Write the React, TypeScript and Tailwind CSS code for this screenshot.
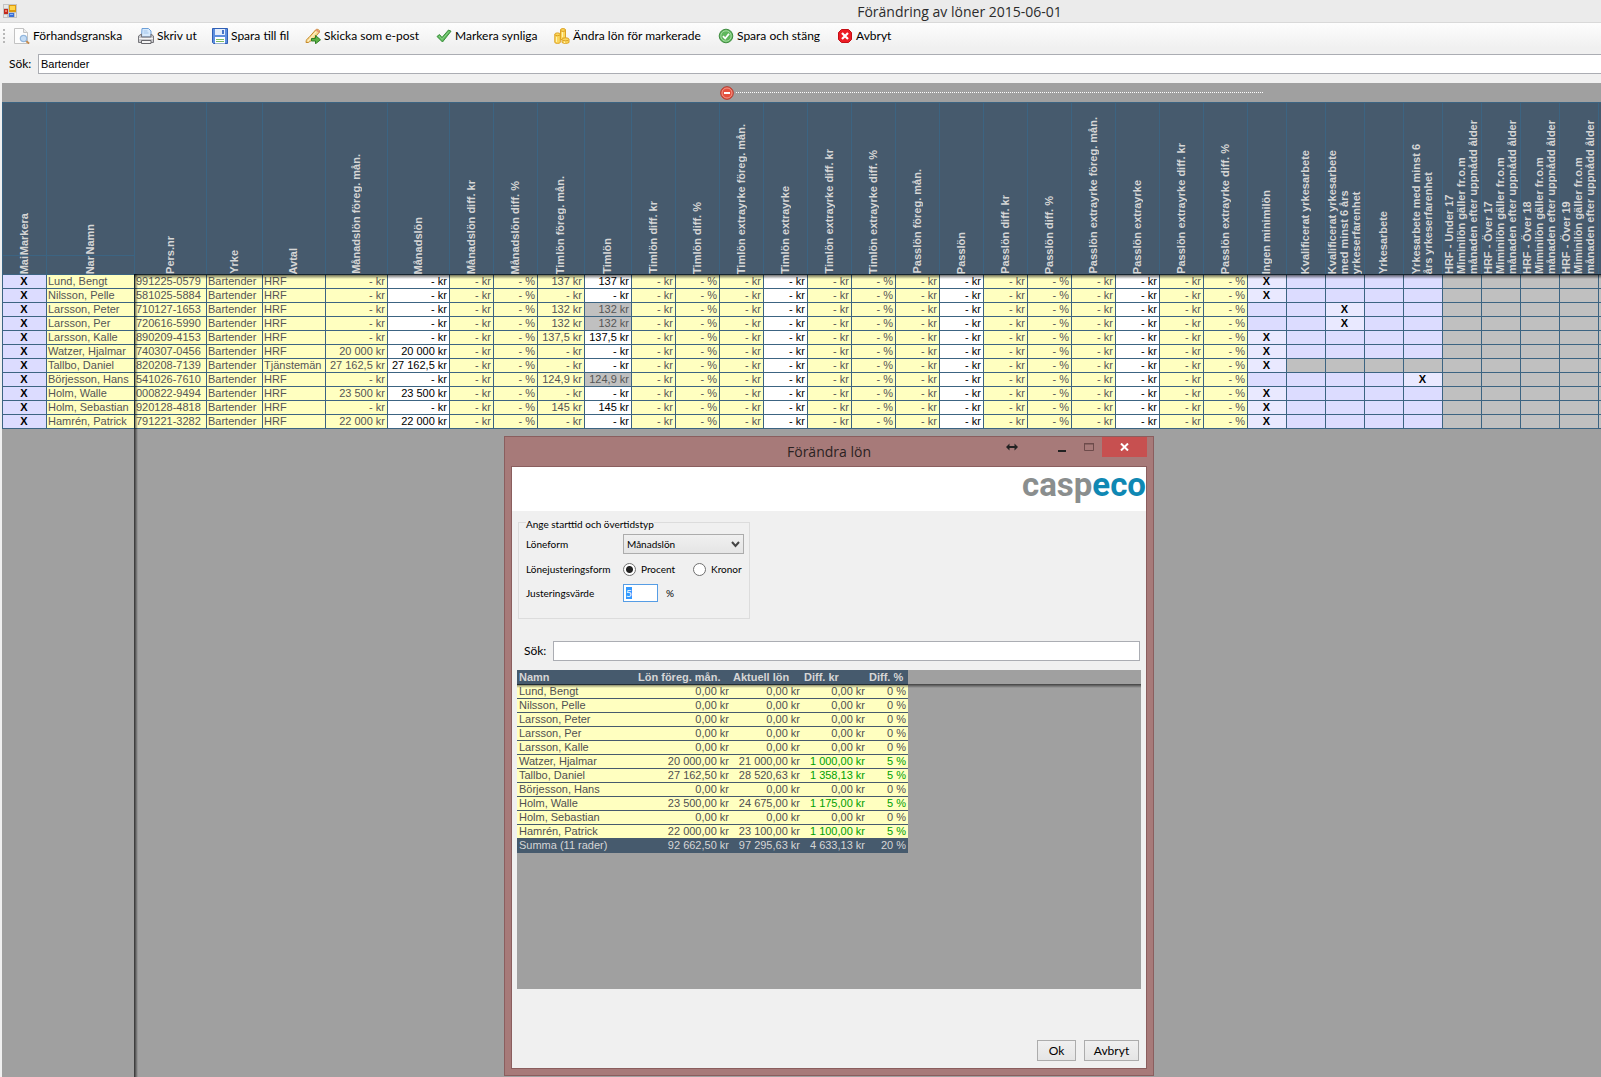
import React, { useEffect, useRef, useState } from 'react';
import clsx from 'clsx';

type Tone = 'yellow' | 'white' | 'grey' | 'lilac' | 'mark';

interface Column {
  title: string;
  width: string;
}

interface Employee {
  name: string;
  personNumber: string;
  agreement: string;
  monthly: string;
  hourly: string;
  hourlyLocked?: boolean;
  level: number;
  levelsLocked?: boolean;
}

const COLUMNS: Column[] = [
  { title: 'Pers.nr', width: 'w-[72px]' },
  { title: 'Yrke', width: 'w-[56px]' },
  { title: 'Avtal', width: 'w-[63px]' },
  { title: 'Månadslön föreg. mån.', width: 'w-[62px]' },
  { title: 'Månadslön', width: 'w-[62px]' },
  { title: 'Månadslön diff. kr', width: 'w-[44px]' },
  { title: 'Månadslön diff. %', width: 'w-[44px]' },
  { title: 'Timlön föreg. mån.', width: 'w-[47px]' },
  { title: 'Timlön', width: 'w-[47px]' },
  { title: 'Timlön diff. kr', width: 'w-[44px]' },
  { title: 'Timlön diff. %', width: 'w-[44px]' },
  { title: 'Timlön extrayrke föreg. mån.', width: 'w-[44px]' },
  { title: 'Timlön extrayrke', width: 'w-[44px]' },
  { title: 'Timlön extrayrke diff. kr', width: 'w-[44px]' },
  { title: 'Timlön extrayrke diff. %', width: 'w-[44px]' },
  { title: 'Passlön föreg. mån.', width: 'w-[44px]' },
  { title: 'Passlön', width: 'w-[44px]' },
  { title: 'Passlön diff. kr', width: 'w-[44px]' },
  { title: 'Passlön diff. %', width: 'w-[44px]' },
  { title: 'Passlön extrayrke föreg. mån.', width: 'w-[44px]' },
  { title: 'Passlön extrayrke', width: 'w-[44px]' },
  { title: 'Passlön extrayrke diff. kr', width: 'w-[44px]' },
  { title: 'Passlön extrayrke diff. %', width: 'w-[44px]' },
  { title: 'Ingen minimilön', width: 'w-[39px]' },
  { title: 'Kvalificerat yrkesarbete', width: 'w-[39px]' },
  { title: 'Kvalificerat yrkesarbete\nmed minst 6 års\nyrkeserfarenhet', width: 'w-[39px]' },
  { title: 'Yrkesarbete', width: 'w-[39px]' },
  { title: 'Yrkesarbete med minst 6\nårs yrkeserfarenhet', width: 'w-[39px]' },
  { title: 'HRF - Under 17\nMiminilön gäller fr.o.m\nmånaden efter uppnådd ålder', width: 'w-[39px]' },
  { title: 'HRF - Över 17\nMiminilön gäller fr.o.m\nmånaden efter uppnådd ålder', width: 'w-[39px]' },
  { title: 'HRF - Över 18\nMiminilön gäller fr.o.m\nmånaden efter uppnådd ålder', width: 'w-[39px]' },
  { title: 'HRF - Över 19\nMiminilön gäller fr.o.m\nmånaden efter uppnådd ålder', width: 'w-[39px]' },
  { title: '', width: 'w-[39px]' },
];

const EMPLOYEES: Employee[] = [
  { name: 'Lund, Bengt', personNumber: '991225-0579', agreement: 'HRF', monthly: '- kr', hourly: '137 kr', level: 0 },
  { name: 'Nilsson, Pelle', personNumber: '581025-5884', agreement: 'HRF', monthly: '- kr', hourly: '- kr', level: 0 },
  { name: 'Larsson, Peter', personNumber: '710127-1653', agreement: 'HRF', monthly: '- kr', hourly: '132 kr', hourlyLocked: true, level: 2 },
  { name: 'Larsson, Per', personNumber: '720616-5990', agreement: 'HRF', monthly: '- kr', hourly: '132 kr', hourlyLocked: true, level: 2 },
  { name: 'Larsson, Kalle', personNumber: '890209-4153', agreement: 'HRF', monthly: '- kr', hourly: '137,5 kr', level: 0 },
  { name: 'Watzer, Hjalmar', personNumber: '740307-0456', agreement: 'HRF', monthly: '20 000 kr', hourly: '- kr', level: 0 },
  { name: 'Tallbo, Daniel', personNumber: '820208-7139', agreement: 'Tjänstemän', monthly: '27 162,5 kr', hourly: '- kr', level: 0, levelsLocked: true },
  { name: 'Börjesson, Hans', personNumber: '541026-7610', agreement: 'HRF', monthly: '- kr', hourly: '124,9 kr', hourlyLocked: true, level: 4 },
  { name: 'Holm, Walle', personNumber: '000822-9494', agreement: 'HRF', monthly: '23 500 kr', hourly: '- kr', level: 0 },
  { name: 'Holm, Sebastian', personNumber: '920128-4818', agreement: 'HRF', monthly: '- kr', hourly: '145 kr', level: 0 },
  { name: 'Hamrén, Patrick', personNumber: '791221-3282', agreement: 'HRF', monthly: '22 000 kr', hourly: '- kr', level: 0 },
];

const ADJUSTMENTS = [
  ['Lund, Bengt', '0,00 kr', '0,00 kr', '0,00 kr', '0 %'],
  ['Nilsson, Pelle', '0,00 kr', '0,00 kr', '0,00 kr', '0 %'],
  ['Larsson, Peter', '0,00 kr', '0,00 kr', '0,00 kr', '0 %'],
  ['Larsson, Per', '0,00 kr', '0,00 kr', '0,00 kr', '0 %'],
  ['Larsson, Kalle', '0,00 kr', '0,00 kr', '0,00 kr', '0 %'],
  ['Watzer, Hjalmar', '20 000,00 kr', '21 000,00 kr', '1 000,00 kr', '5 %'],
  ['Tallbo, Daniel', '27 162,50 kr', '28 520,63 kr', '1 358,13 kr', '5 %'],
  ['Börjesson, Hans', '0,00 kr', '0,00 kr', '0,00 kr', '0 %'],
  ['Holm, Walle', '23 500,00 kr', '24 675,00 kr', '1 175,00 kr', '5 %'],
  ['Holm, Sebastian', '0,00 kr', '0,00 kr', '0,00 kr', '0 %'],
  ['Hamrén, Patrick', '22 000,00 kr', '23 100,00 kr', '1 100,00 kr', '5 %'],
];

const TONES: Record<Tone, string> = {
  yellow: 'bg-[#ffffc0] text-[#555555]',
  white: 'bg-white text-black',
  grey: 'bg-[#c0c0c0] text-[#555555]',
  lilac: 'bg-[#dcdcff] text-black',
  mark: 'bg-[#e9e9ff] text-black',
};

/* ---------- Icons ---------- */

const AppIcon = () => (
  <svg width="14" height="14" viewBox="0 0 14 14">
    <path d="M0 0h14v14H0z" fill="#c4c4c4" />
    <path d="M1 1h4v3H1zM1 11h3v2H1zM12 9h1v4h-1z" fill="#e8e8e8" />
    <path d="M1 5h4v5H1z" fill="#c22a1c" />
    <path d="M2 6h2v2H2z" fill="#ef7c6a" />
    <path d="M6 1h7v7H6z" fill="#dc9a10" />
    <path d="M7 2h5v4H7z" fill="#ffd54a" />
    <path d="M6 9h5v4H6z" fill="#3b6fd6" />
    <path d="M7 10h3v1H7z" fill="#8fb6f5" />
  </svg>
);

const PreviewIcon = () => (
  <svg width="16" height="16" viewBox="0 0 16 16">
    <path d="M.5 .5h9l4 4v11H.5z" fill="#fdfdfd" stroke="#c3c3c3" />
    <path d="M9.500 .5v4h4" fill="#ececec" stroke="#c3c3c3" />
    <path d="M12 13l2.500 2" stroke="#c58b4e" strokeWidth="2" strokeLinecap="round" />
    <circle cx="9.500" cy="10.500" r="3.200" fill="#c4dcf5" stroke="#93b7dd" strokeWidth="1.200" />
  </svg>
);

const PrintIcon = () => (
  <svg width="16" height="16" viewBox="0 0 16 16">
    <path d="M4 .5h6.500L13 3v6H3.500z" fill="#d8eafc" stroke="#6c9fd8" />
    <path d="M5.500 3h4M5.500 5h5" stroke="#9fc3ea" />
    <path d="M.5 8L3.500 6v3h9.500V6l2.500 2V14.500H.5z" fill="#c9c9cc" stroke="#77777c" />
    <path d="M1 10.500h14" stroke="#f4f4f4" />
    <path d="M3.500 12.500h9.500v3h-9.500z" fill="#f4f4f4" stroke="#66666b" />
  </svg>
);

const SaveIcon = () => (
  <svg width="16" height="16" viewBox="0 0 16 16">
    <path d="M.5 .5h15v15h-14l-1-1z" fill="#5d8ede" stroke="#2f5fb5" />
    <path d="M3 1h10v6H3z" fill="#e3edfb" />
    <path d="M10 2h2v4h-2z" fill="#4474c8" />
    <path d="M3 9h10v6.500H3z" fill="#fff" />
    <path d="M4 11.500h8M4 13.500h8" stroke="#7dbb62" />
  </svg>
);

const MailIcon = () => (
  <svg width="16" height="16" viewBox="0 0 16 16">
    <path d="M1 14.500c0-3 1.500-4 3-5L10.500 2c1-1.500 4.500-.5 4 2L8 11.500c-1.500 1.500-3 1.500-4.500 3z" fill="#f8dc93" stroke="#c5892c" />
    <path d="M11 1.500l3.500 3" stroke="#e28e76" strokeWidth="1.500" />
    <path d="M3 13l8-9" stroke="#fff4d2" />
    <path d="M6.500 10.500h4v-3l5 4.300-5 4v-2.800h-4z" fill="#5cb244" stroke="#2f7e24" />
  </svg>
);

const CheckIcon = () => (
  <svg width="16" height="16" viewBox="0 0 16 16">
    <path d="M1 8.500l2.500-2 2.500 3 6.500-7.500 2.500 1.200-8.500 10.800z" fill="#5cb85a" stroke="#3c8f3e" strokeLinejoin="round" />
    <path d="M3 8l3 3.500 7-8" fill="none" stroke="#8ed48b" />
  </svg>
);

const CoinsIcon = () => (
  <svg width="16" height="16" viewBox="0 0 16 16">
    <g fill="#fbd75c" stroke="#dca124">
      <path d="M6.500 2v9.500h5V2z" />
      <ellipse cx="9" cy="2" rx="2.500" ry="1.400" />
      <path d="M.8 6.500v8c1 1.200 4.500 1.200 5.500 0v-8z" />
      <ellipse cx="3.500" cy="6.300" rx="2.700" ry="1.400" />
      <path d="M8 11.500v3c1.500 1.200 5.500 1.200 7 0v-3z" />
      <ellipse cx="11.500" cy="11.300" rx="3.500" ry="1.500" />
    </g>
    <path d="M2.500 9v5M8.500 4v5M10.500 13.500v1.500" stroke="#fff1b0" />
  </svg>
);

const SaveCloseIcon = () => (
  <svg width="16" height="16" viewBox="0 0 16 16">
    <circle cx="8" cy="8" r="6.800" fill="#5fb75c" stroke="#3f8c40" />
    <circle cx="8" cy="8" r="5.200" fill="none" stroke="#a5dba2" />
    <path d="M5 8.200l2.200 2.300L11 5.800" fill="none" stroke="#fff" strokeWidth="1.800" />
  </svg>
);

const CancelIcon = () => (
  <svg width="16" height="16" viewBox="0 0 16 16">
    <path d="M4.500 1.500h7l3 3v7l-3 3h-7l-3-3v-7z" fill="#ec1c24" stroke="#c40f16" strokeLinejoin="round" />
    <path d="M5 5l6 6M11 5l-6 6" stroke="#fff" strokeWidth="2.200" />
  </svg>
);

const TOOLS = [
  { label: 'Förhandsgranska', icon: <PreviewIcon />, width: 'w-[124px]' },
  { label: 'Skriv ut', icon: <PrintIcon />, width: 'w-[74px]' },
  { label: 'Spara till fil', icon: <SaveIcon />, width: 'w-[93px]' },
  { label: 'Skicka som e-post', icon: <MailIcon />, width: 'w-[131px]' },
  { label: 'Markera synliga', icon: <CheckIcon />, width: 'w-[118px]' },
  { label: 'Ändra lön för markerade', icon: <CoinsIcon />, width: 'w-[164px]' },
  { label: 'Spara och stäng', icon: <SaveCloseIcon />, width: 'w-[119px]' },
  { label: 'Avbryt', icon: <CancelIcon />, width: 'w-[60px]' },
];

/* ---------- Main window ---------- */

const Toolbar: React.FC = () => (
  <div className="flex h-[26px] items-center border-t border-[#d9d9d9] bg-gradient-to-b from-[#fdfdfd] to-[#f0f0f0] pl-[3px]">
    <div className="mr-[9px] flex flex-col gap-[2px]">
      <i className="size-[2px] bg-[#b8b8b8]" />
      <i className="size-[2px] bg-[#b8b8b8]" />
      <i className="size-[2px] bg-[#b8b8b8]" />
      <i className="size-[2px] bg-[#b8b8b8]" />
    </div>
    {TOOLS.map((tool) => (
      <button key={tool.label} className={clsx('flex shrink-0 items-center gap-[3px] whitespace-nowrap text-[12px] leading-4 text-black', tool.width)}>
        <span className="shrink-0">{tool.icon}</span>
        {tool.label}
      </button>
    ))}
  </div>
);

const VerticalText: React.FC<{ children: string }> = ({ children }) => (
  <span className="inline-block rotate-180 whitespace-pre text-left leading-[12px] [writing-mode:vertical-rl]">{children}</span>
);

// Frozen columns repeat the start of their caption in the lower strip
const FrozenHeader: React.FC<{ title: string; stub: string; className: string }> = ({ title, stub, className }) => (
  <th className={clsx('border-r border-t border-[#3c6482] p-0 align-bottom', className)}>
    <div className="flex h-[153px] items-end justify-center border-b border-[#3c6482] pr-[2px]">
      <VerticalText>{title}</VerticalText>
    </div>
    <div className="flex h-[18px] items-end justify-center pr-[2px]">
      <VerticalText>{stub}</VerticalText>
    </div>
  </th>
);

const Cell: React.FC<{ tone: Tone; align?: 'left' | 'right' | 'center'; children?: React.ReactNode }> = ({ tone, align = 'right', children }) => (
  <td
    className={clsx(
      'h-[14px] overflow-hidden whitespace-nowrap border-b border-r border-[#3c6482] py-0 pl-px pr-[2px]',
      TONES[tone],
      align === 'left' && 'text-left',
      align === 'right' && 'text-right',
      align === 'center' && 'text-center font-bold',
    )}
  >
    {children}
  </td>
);

const EmployeeRow: React.FC<{ employee: Employee }> = ({ employee }) => {
  const extras: { text: string; tone: Tone }[] = [
    { text: '- kr', tone: 'yellow' },
    { text: '- %', tone: 'yellow' },
    { text: '- kr', tone: 'yellow' },
    { text: '- kr', tone: 'white' },
  ];

  return (
    <tr>
      <td className="h-[14px] border-x border-b border-[#3c6482] bg-[#dcdcff] py-0 pl-px pr-[2px] text-center font-bold text-black">X</td>
      <Cell tone="yellow" align="left">{employee.name}</Cell>
      <Cell tone="yellow" align="left">{employee.personNumber}</Cell>
      <Cell tone="yellow" align="left">Bartender</Cell>
      <Cell tone="yellow" align="left">{employee.agreement}</Cell>
      <Cell tone="yellow">{employee.monthly}</Cell>
      <Cell tone="white">{employee.monthly}</Cell>
      <Cell tone="yellow">- kr</Cell>
      <Cell tone="yellow">- %</Cell>
      <Cell tone="yellow">{employee.hourly}</Cell>
      <Cell tone={employee.hourlyLocked ? 'grey' : 'white'}>{employee.hourly}</Cell>
      {[0, 1, 2].map((group) => extras.map((cell, i) => <Cell key={`${group}-${i}`} tone={cell.tone}>{cell.text}</Cell>))}
      <Cell tone="yellow">- kr</Cell>
      <Cell tone="yellow">- %</Cell>
      {[0, 1, 2, 3, 4].map((level) => {
        const marked = employee.level === level;
        const locked = employee.levelsLocked && level > 0;
        return (
          <Cell key={level} tone={marked ? 'mark' : locked ? 'grey' : 'lilac'} align="center">
            {marked && 'X'}
          </Cell>
        );
      })}
      {[0, 1, 2, 3, 4].map((i) => <Cell key={i} tone="grey" />)}
    </tr>
  );
};

const SalaryGrid: React.FC = () => (
  <div className="relative ml-[2px] flex-1 overflow-hidden bg-[#a0a0a0]">
    {/* Collapse handle over the hourly and shift columns */}
    <div className="flex h-[19px] items-center pl-[718px]">
      <button aria-label="Dölj kolumner" className="size-[14px]">
        <svg width="14" height="14" viewBox="0 0 14 14">
          <circle cx="7" cy="7" r="6.300" fill="#e4513f" stroke="#b5382b" />
          <circle cx="7" cy="7" r="5" fill="none" stroke="#f39a8c" />
          <path d="M4 7h6" stroke="#fff" strokeWidth="2" />
        </svg>
      </button>
      <div className="ml-[2px] w-[527px] border-t border-dotted border-white" />
    </div>

    <table className="w-[1636px] table-fixed border-separate border-spacing-0 text-[11px] leading-[13px]">
      <thead className="bg-[#465a6d] text-[#d6d6d6]">
        <tr>
          <FrozenHeader title="Markera" stub="Mai" className="w-[45px] border-l" />
          <FrozenHeader title="Namn" stub="Nar" className="w-[88px]" />
          {COLUMNS.map((column, i) => (
            <th key={i} className={clsx('h-[172px] border-r border-t border-[#3c6482] p-0 text-center align-bottom', column.width)}>
              <div className="flex justify-center pr-[2px]">
                <VerticalText>{column.title}</VerticalText>
              </div>
            </th>
          ))}
        </tr>
      </thead>
      <tbody>
        <tr>
          <td colSpan={35} className="h-px bg-[#3c6482] p-0" />
        </tr>
        {EMPLOYEES.map((employee) => (
          <EmployeeRow key={employee.personNumber} employee={employee} />
        ))}
      </tbody>
    </table>

    {/* Shadows cast by the frozen header and columns */}
    <div className="pointer-events-none absolute left-[132px] right-0 top-[191px] h-[5px] bg-gradient-to-b from-black/70 to-transparent" />
    <div className="pointer-events-none absolute bottom-0 left-[132px] top-[191px] w-[4px] bg-gradient-to-r from-black/70 to-transparent" />
  </div>
);

/* ---------- Dialog ---------- */

const TitleBar: React.FC = () => (
  <div className="grid h-[29px] grid-cols-[1fr_auto_1fr] font-['Open_Sans',sans-serif]">
    <span />
    <h2 className="self-center text-[14px] leading-5 text-[#2b2222]">Förändra lön</h2>
    <div className="flex items-start justify-end">
      <button aria-label="Flytta" className="mr-[28px] flex h-[20px] w-[16px] items-center justify-center">
        <svg width="12" height="8" viewBox="0 0 12 8">
          <path d="M0 4l3.500-3.500v2.500h5V.5L12 4 8.500 7.500V5h-5v2.500z" fill="#222" />
        </svg>
      </button>
      <button aria-label="Minimera" className="flex h-[20px] w-[27px] items-center justify-center">
        <svg width="8" height="10" viewBox="0 0 8 10">
          <path d="M0 8h8v2H0z" fill="#222" />
        </svg>
      </button>
      <button aria-label="Maximera" className="flex h-[20px] w-[27px] items-center justify-center">
        <svg width="10" height="8" viewBox="0 0 10 8">
          <path d="M.5 1h9v6.500h-9zM0 .5h10" fill="none" stroke="#6d4b4b" />
        </svg>
      </button>
      <button aria-label="Stäng" className="flex h-[20px] w-[45px] items-center justify-center bg-[#c75050]">
        <svg width="9" height="8" viewBox="0 0 9 8">
          <path d="M1 .5l7 7M8 .5l-7 7" stroke="#fff" strokeWidth="2" />
        </svg>
      </button>
    </div>
  </div>
);

const AdjustmentTable: React.FC = () => (
  <div className="relative mx-[5px] mt-[9px] h-[319px] bg-[#a0a0a0] font-['Liberation_Sans',Arial,sans-serif]">
    <table className="w-[391px] table-fixed border-separate border-spacing-0 text-[11px] leading-[13px]">
      <thead>
        <tr className="bg-[#465a6d] text-left text-[#d6d6d6]">
          <th className="h-[15px] w-[119px] px-[2px] py-0">Namn</th>
          <th className="w-[95px] whitespace-nowrap px-[2px] py-0">Lön föreg. mån.</th>
          <th className="w-[71px] px-[2px] py-0">Aktuell lön</th>
          <th className="w-[65px] px-[2px] py-0">Diff. kr</th>
          <th className="w-[41px] whitespace-nowrap px-[2px] py-0">Diff. %</th>
        </tr>
      </thead>
      <tbody>
        {ADJUSTMENTS.map(([name, ...values]) => (
          <tr key={name} className="bg-[#ffffc0] text-[#505050]">
            <td className="h-[14px] border-b border-[#465a6d] px-[2px] py-0">{name}</td>
            {values.map((value, i) => (
              <td
                key={i}
                className={clsx(
                  'whitespace-nowrap border-b border-[#465a6d] px-[2px] py-0 text-right',
                  i > 1 && !value.startsWith('0') && 'text-[#00a000]',
                )}
              >
                {value}
              </td>
            ))}
          </tr>
        ))}
      </tbody>
      <tfoot>
        <tr className="bg-[#465a6d] text-right text-[#d6d6d6]">
          <td className="h-[14px] border-b border-[#465a6d] px-[2px] py-0 text-left">Summa (11 rader)</td>
          <td className="border-b border-[#465a6d] px-[2px] py-0">92 662,50 kr</td>
          <td className="border-b border-[#465a6d] px-[2px] py-0">97 295,63 kr</td>
          <td className="border-b border-[#465a6d] px-[2px] py-0">4 633,13 kr</td>
          <td className="border-b border-[#465a6d] px-[2px] py-0">20 %</td>
        </tr>
      </tfoot>
    </table>
    <div className="pointer-events-none absolute inset-x-0 top-[14px] h-[4px] bg-gradient-to-b from-black/60 to-transparent" />
  </div>
);

const RADIO =
  'size-[13px] appearance-none rounded-full border border-[#707070] bg-white checked:bg-[radial-gradient(circle,#222_0_3px,#fff_4px)]';

const AdjustDialog: React.FC = () => {
  const [form, setForm] = useState('procent');
  const [amount, setAmount] = useState('5');
  const amountRef = useRef<HTMLInputElement>(null);

  useEffect(() => {
    amountRef.current?.focus({ preventScroll: true });
    amountRef.current?.select();
  }, []);

  return (
    <section className="absolute left-[504px] top-[436px] w-[650px] border border-[#8a5e5e] bg-[#a77a79] px-[6px] pb-[6px]">
      <TitleBar />
      <div className="border border-[#8a5e5e] bg-[#f0f0f0] pb-[7px]">
        <div className="flex h-[44px] justify-end bg-white font-['Roboto',sans-serif] text-[33px] font-bold leading-[36px] text-[#8a8e8e]">
          casp<span className="text-[#0f88b3]">eco</span>
        </div>

        <fieldset className="ml-[6px] mt-[2px] w-[232px] border border-[#dcdcdc] pb-[13px] pl-[7px] pr-[5px] text-[10px] leading-[14px]">
          <legend className="pt-[4px]">Ange starttid och övertidstyp</legend>
          <div className="flex h-[26px] items-center">
            <label htmlFor="wage-form" className="w-[97px]">Löneform</label>
            <div className="relative">
              <select
                id="wage-form"
                className="h-[20px] w-[121px] appearance-none border border-[#acacac] bg-gradient-to-b from-[#f0f0f0] to-[#e5e5e5] pl-[3px] leading-[14px]"
              >
                <option>Månadslön</option>
                <option>Timlön</option>
              </select>
              <svg className="pointer-events-none absolute right-[4px] top-[7px]" width="9" height="7" viewBox="0 0 9 7">
                <path d="M1 1l3.500 4L8 1" fill="none" stroke="#444" strokeWidth="2" />
              </svg>
            </div>
          </div>
          <div className="flex h-[24px] items-center">
            <span className="w-[97px]">Lönejusteringsform</span>
            <label className="flex w-[70px] items-center gap-[5px]">
              <input type="radio" name="form" className={RADIO} checked={form === 'procent'} onChange={() => setForm('procent')} />
              Procent
            </label>
            <label className="flex items-center gap-[5px]">
              <input type="radio" name="form" className={RADIO} checked={form === 'kronor'} onChange={() => setForm('kronor')} />
              Kronor
            </label>
          </div>
          <div className="flex h-[24px] items-center">
            <label htmlFor="amount" className="w-[97px]">Justeringsvärde</label>
            <input
              id="amount"
              ref={amountRef}
              value={amount}
              onChange={(e) => setAmount(e.target.value)}
              className="mr-[8px] h-[18px] w-[35px] border border-[#569de5] bg-white px-[2px] outline-none selection:bg-[#3399ff] selection:text-white"
            />
            %
          </div>
        </fieldset>

        <div className="mt-[22px] flex items-center pl-[12px] pr-[6px]">
          <label htmlFor="dialog-search" className="w-[29px] text-[12px] leading-4">Sök:</label>
          <input id="dialog-search" className="h-[20px] min-w-0 flex-1 border border-[#abadb3] bg-white px-[3px] text-[12px] outline-none" />
        </div>

        <AdjustmentTable />

        <div className="mt-[51px] flex justify-end gap-[8px] pr-[7px] text-[12px] leading-4">
          <button className="h-[21px] w-[39px] border border-[#acacac] bg-gradient-to-b from-[#f0f0f0] to-[#e5e5e5]">Ok</button>
          <button className="h-[21px] w-[55px] border border-[#acacac] bg-gradient-to-b from-[#f0f0f0] to-[#e5e5e5]">Avbryt</button>
        </div>
      </div>
    </section>
  );
};

export default function App() {
  const [query, setQuery] = useState('Bartender');

  return (
    <main className="relative flex min-h-screen flex-col overflow-hidden bg-[#f0f0f0] font-['Lato','Open_Sans',sans-serif] text-black">
      <header className="flex h-[22px] items-center bg-[#ebebeb] pl-[3px]">
        <AppIcon />
        <h1 className="flex-1 pl-[301px] pt-[2px] text-center font-['Open_Sans',sans-serif] text-[14px] leading-5 text-[#2b2b2b]">Förändring av löner 2015-06-01</h1>
      </header>
      <Toolbar />
      <div className="flex items-center pb-[9px] pl-[9px] pt-[6px]">
        <label htmlFor="search" className="w-[29px] text-[12px] leading-4">Sök:</label>
        <input
          id="search"
          value={query}
          onChange={(e) => setQuery(e.target.value)}
          className="h-[20px] min-w-0 flex-1 border border-r-0 border-[#abadb3] bg-white px-[2px] font-['Liberation_Sans',Arial,sans-serif] text-[11px] outline-none"
        />
      </div>
      <div className="flex flex-1 flex-col font-['Liberation_Sans',Arial,sans-serif]">
        <SalaryGrid />
      </div>
      <AdjustDialog />
    </main>
  );
}
